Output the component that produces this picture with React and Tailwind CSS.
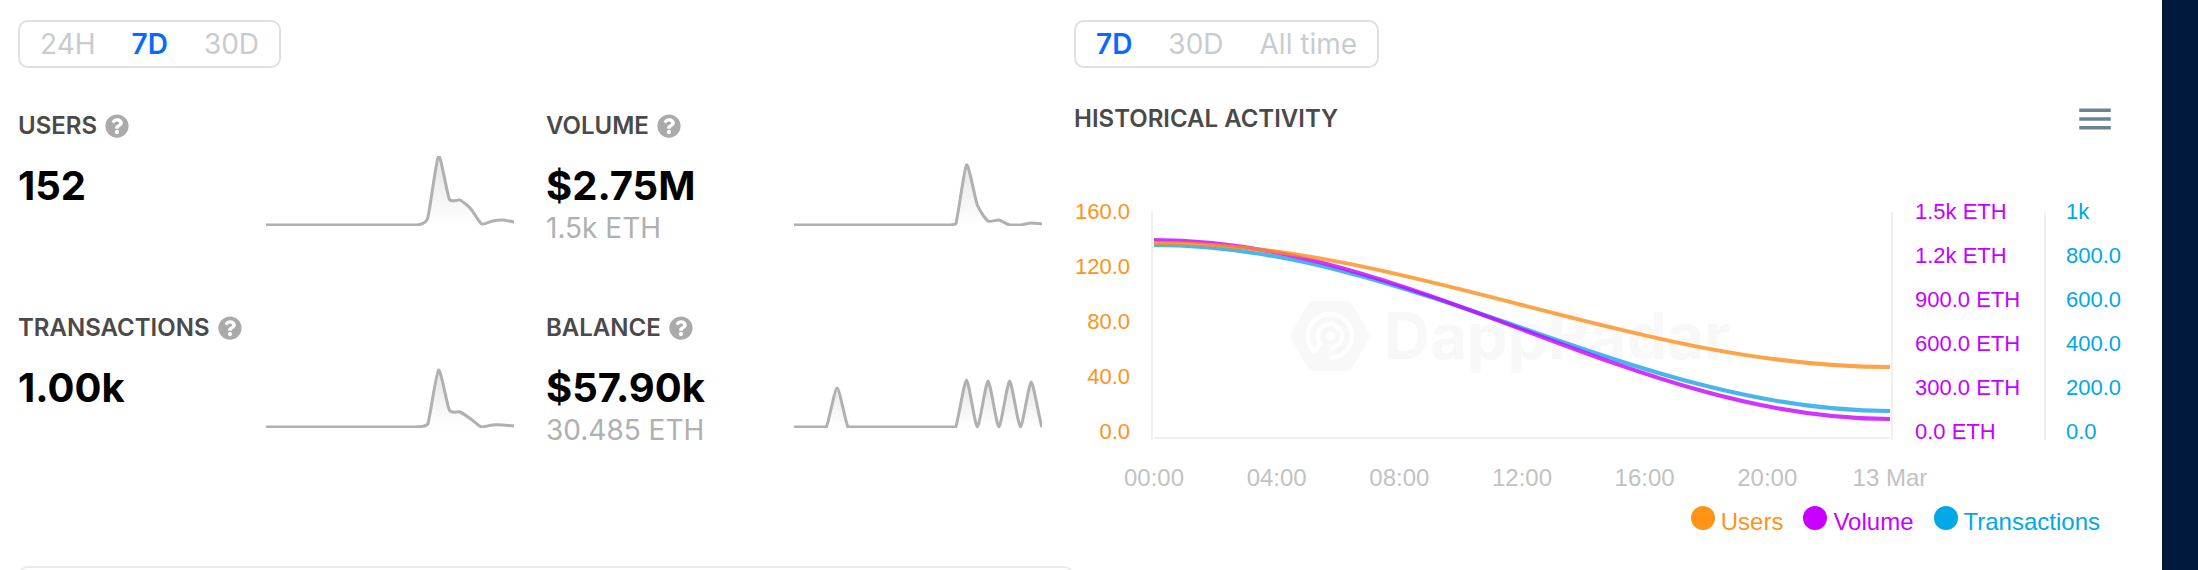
import React, { useId, useState } from "react";
import { FaQuestionCircle } from "react-icons/fa";
import { MdMenu } from "react-icons/md";

const METRICS = [
    {
        label: "Users",
        value: "152",
        points: [0, 0, 0, 0, 0, 0, 0, 0, 0, 0, 0, 0, 0, 0, 0, 7, 69, 26, 25, 16, 1, 4, 5, 3],
    },
    {
        label: "Volume",
        value: "$2.75M",
        sub: "1.5k ETH",
        points: [0, 0, 0, 0, 0, 0, 0, 0, 0, 0, 0, 0, 0, 0, 0, 1, 60, 20, 4, 5, 0, 0, 2, 1],
    },
    {
        label: "Transactions",
        value: "1.00k",
        points: [0, 0, 0, 0, 0, 0, 0, 0, 0, 0, 0, 0, 0, 0, 0, 3, 57, 17, 15, 8, 0, 2, 2, 1],
    },
    {
        label: "Balance",
        value: "$57.90k",
        sub: "30.485 ETH",
        points: [0, 0, 0, 0, 39, 0, 0, 0, 0, 0, 0, 0, 0, 0, 0, 0, 47, 0, 46, 0, 46, 0, 45, 0],
    },
];

const USERS_AXIS = ["160.0", "120.0", "80.0", "40.0", "0.0"];
const VOLUME_AXIS = ["1.5k ETH", "1.2k ETH", "900.0 ETH", "600.0 ETH", "300.0 ETH", "0.0 ETH"];
const TX_AXIS = ["1k", "800.0", "600.0", "400.0", "200.0", "0.0"];
const TIME_AXIS = ["00:00", "04:00", "08:00", "12:00", "16:00", "20:00", "13 Mar"];

const SERIES = [
    { name: "Users", text: "text-[#ff9318]", dot: "bg-[#ff9318]" },
    { name: "Volume", text: "text-[#c800ff]", dot: "bg-[#c800ff]" },
    { name: "Transactions", text: "text-[#00a8e8]", dot: "bg-[#00a8e8]" },
];

const RangePicker = ({ options, label }) => {
    const [active, setActive] = useState("7D");

    return (
        <div
            role="group"
            aria-label={label}
            className="inline-flex h-12 items-center gap-9 rounded-[10px] border-2 border-[#e0e0e0] px-5 text-[28px] leading-8"
        >
            {options.map((option) => (
                <button
                    key={option}
                    type="button"
                    aria-pressed={option === active}
                    onClick={() => setActive(option)}
                    className={option === active ? "font-semibold text-[#0969ff]" : "font-normal text-[#c8ccd0]"}
                >
                    {option}
                </button>
            ))}
        </div>
    );
};

// Lightly smoothed line, control points never dip under the baseline
const sparkPath = (points) => {
    const step = 248 / (points.length - 1);
    const y = (v) => 69 - Math.max(v, 0);
    const pull = points.map((p, i) => ((points[i + 1] ?? p) - (points[i - 1] ?? p)) * 0.1);
    return points.reduce((d, p, i) => {
        const x = i * step;
        if (i === 0) return `M0 ${y(p)}`;
        const c1 = `${x - step * 0.8} ${y(points[i - 1] + pull[i - 1])}`;
        const c2 = `${x - step * 0.2} ${y(p - pull[i])}`;
        return `${d} C${c1} ${c2} ${x} ${y(p)}`;
    }, "");
};

const Sparkline = ({ points }) => {
    const id = useId();
    const line = sparkPath(points);

    return (
        <svg viewBox="0 0 248 70" className="h-[70px] w-[248px] shrink-0" fill="none" aria-hidden="true">
            <defs>
                <linearGradient id={id} x1="0" y1="0" x2="0" y2="1">
                    <stop offset="0" stopColor="#aaa" stopOpacity="0.3" />
                    <stop offset="1" stopColor="#aaa" stopOpacity="0" />
                </linearGradient>
            </defs>
            <path d={`${line} V70 H0 Z`} fill={`url(#${id})`} />
            <path d={line} stroke="#b0b0b0" strokeWidth="3" strokeLinejoin="round" />
        </svg>
    );
};

const Metric = ({ label, value, sub, points }) => (
    <div className="pr-8">
        <div className="flex items-center gap-2">
            <h3 className="text-2xl leading-8 font-semibold text-[#4a4a4a] uppercase">{label}</h3>
            <button type="button" aria-label={`About ${label}`} className="text-[#aaa]">
                <FaQuestionCircle size={24} />
            </button>
        </div>
        <div className="flex justify-between">
            <div className="pt-[18px]">
                <p className="text-[40px] leading-[52px] font-bold text-black">{value}</p>
                {sub && <p className="text-[28px] leading-8 font-normal text-[#b0b0b0]">{sub}</p>}
            </div>
            <div className="pt-[14px]">
                <Sparkline points={points} />
            </div>
        </div>
    </div>
);

const Axis = ({ labels, className }) => (
    <div className={`flex flex-col justify-between text-[22px] leading-6 ${className}`}>
        {labels.map((label) => (
            <span key={label}>{label}</span>
        ))}
    </div>
);

const Watermark = () => (
    <div className="absolute inset-0 flex items-center justify-center gap-[14px] pt-5 pr-6 text-[#f8f8f8]">
        <svg viewBox="0 0 80 70" className="h-[70px] w-20" fill="none" aria-hidden="true">
            <path
                d="M23 0H57Q60 0 62 3L79 32Q80 35 79 38L62 67Q60 70 57 70H23Q20 70 18 67L1 38Q0 35 1 32L18 3Q20 0 23 0Z"
                fill="currentColor"
            />
            <g stroke="#fff" strokeWidth="4.500" strokeLinejoin="round">
                <path d="M40 57A22 22 0 1 0 24 50L31 43A12 12 0 1 1 40 47" />
            </g>
            <circle cx="40" cy="35" r="4.500" fill="#fff" />
        </svg>
        <span className="font-['Inter',sans-serif] text-[64px] leading-[70px] font-bold">DappRadar</span>
    </div>
);

const Chart = () => (
    <div className="font-['Liberation_Sans',Arial,sans-serif]">
        <div className="grid grid-cols-[56px_1fr_151px_118px]">
            <Axis labels={USERS_AXIS} className="h-[244px] text-right text-[#ff9318]" />
            <div className="relative mt-3 mb-1 ml-[21px] border-x-2 border-[#f0f0f0]">
                <Watermark />
                <svg
                    viewBox="0 0 738 228"
                    preserveAspectRatio="none"
                    className="relative h-full w-full"
                    fill="none"
                    strokeWidth="4"
                    role="img"
                    aria-label="Users, volume and transactions over time"
                >
                    <path d="M1 226H737" stroke="#f0f0f0" strokeWidth="2" />
                    <g strokeOpacity="0.8">
                        <path d="M1 33C259 33 479 199 737 199" stroke="#1aa3e8" />
                        <path d="M1 28C259 28 479 207 737 207" stroke="#c800ff" />
                        <path d="M1 31C259 31 479 155 737 155" stroke="#ff8c1a" />
                    </g>
                </svg>
            </div>
            <Axis labels={VOLUME_AXIS} className="pl-[22px] text-[#c800ff]" />
            <div className="flex">
                <div className="mt-3 mb-1 w-[2px] bg-[#f0f0f0]" />
                <Axis labels={TX_AXIS} className="pl-5 text-[#00a8e8]" />
            </div>
            <div className="col-start-2 mt-[18px] mr-[3px] ml-6 flex justify-between text-2xl leading-8 text-[#c2c2c2]">
                {TIME_AXIS.map((time) => (
                    <span key={time} className="flex w-0 justify-center whitespace-nowrap">
                        {time}
                    </span>
                ))}
            </div>
        </div>
        <div className="mt-3 flex justify-end gap-5 pr-[62px]">
            {SERIES.map(({ name, text, dot }) => (
                <button key={name} type="button" className={`flex items-start gap-[6px] text-2xl leading-8 ${text}`}>
                    <span className={`size-6 rounded-full ${dot}`} />
                    {name}
                </button>
            ))}
        </div>
    </div>
);

const App = () => (
    <div className="flex h-screen overflow-hidden bg-white pl-[18px] font-['Inter',sans-serif]">
        <main className="grid grow grid-cols-[1056fr_1088fr] pt-5">
            <section>
                <RangePicker options={["24H", "7D", "30D"]} label="Metrics range" />
                <div className="mt-[42px] grid grid-cols-2 gap-y-[68px]">
                    {METRICS.map((metric) => (
                        <Metric key={metric.label} {...metric} />
                    ))}
                </div>
                <div className="mt-[120px] h-16 rounded-[10px] border-2 border-[#ebebeb]" />
            </section>
            <section>
                <RangePicker options={["7D", "30D", "All time"]} label="History range" />
                <div className="mt-[30px] flex h-[42px] items-center justify-between pr-[46px]">
                    <h3 className="text-2xl leading-8 font-semibold text-[#4a4a4a] uppercase">Historical Activity</h3>
                    <button type="button" aria-label="Chart menu" className="text-[#6e8192]">
                        <MdMenu size={42} />
                    </button>
                </div>
                <div className="mt-[60px]">
                    <Chart />
                </div>
            </section>
        </main>
        <aside className="w-9 shrink-0 bg-[#00193d]" />
    </div>
);

export default App;
